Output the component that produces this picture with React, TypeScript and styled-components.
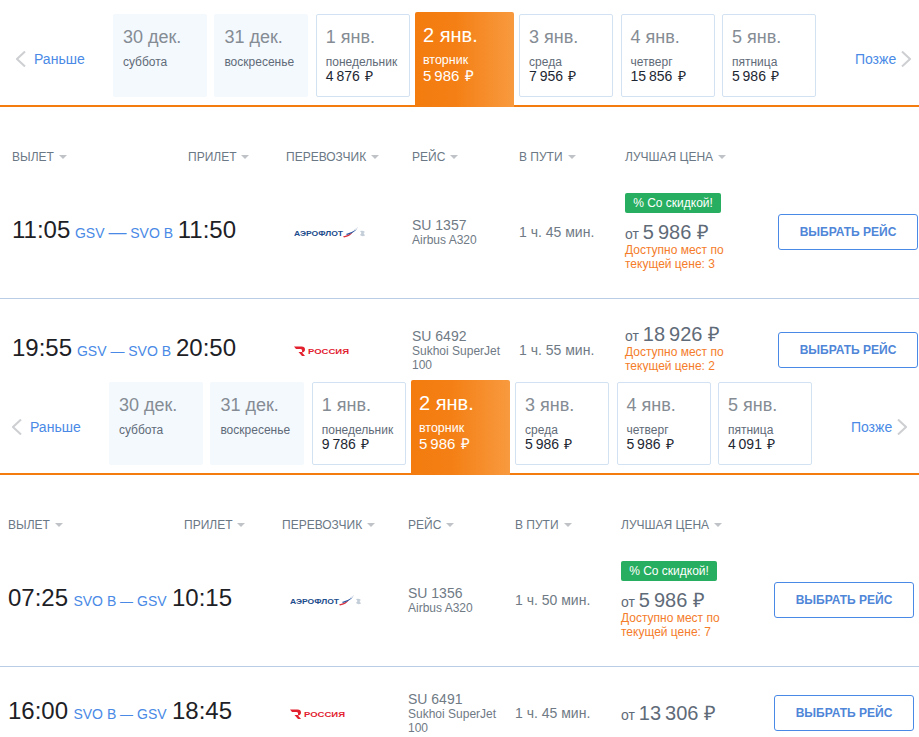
import React from 'react'
import styled, { createGlobalStyle } from 'styled-components'

const GlobalStyle = createGlobalStyle`
    html, body {
        margin: 0;
        padding: 0;
        background: #fff;
        overflow: hidden;
    }

    body {
        width: 919px;
        height: 737px;
        font-family: "Liberation Sans", Arial, sans-serif;
    }
`

const COLUMNS = '176px 98px 126px 107px 106px 153px 140px'

/**
 * Data
 */
interface DayData {
    date: string
    weekday: string
    price?: string
    active?: boolean
}

interface FlightData {
    departure: string
    route: string[]
    dash: number
    arrival: string
    carrier: 'aeroflot' | 'rossiya'
    number: string
    aircraft: string
    duration: string
    discount?: boolean
    price: string
    seats?: number
}

const outboundDays: DayData[] = [
    { date: '30 дек.', weekday: 'суббота' },
    { date: '31 дек.', weekday: 'воскресенье' },
    { date: '1 янв.', weekday: 'понедельник', price: '4\u2009876' },
    { date: '2 янв.', weekday: 'вторник', price: '5\u2009986', active: true },
    { date: '3 янв.', weekday: 'среда', price: '7\u2009956' },
    { date: '4 янв.', weekday: 'четверг', price: '15\u2009856' },
    { date: '5 янв.', weekday: 'пятница', price: '5\u2009986' },
]

const returnDays: DayData[] = [
    { date: '30 дек.', weekday: 'суббота' },
    { date: '31 дек.', weekday: 'воскресенье' },
    { date: '1 янв.', weekday: 'понедельник', price: '9\u2009786' },
    { date: '2 янв.', weekday: 'вторник', price: '5\u2009986', active: true },
    { date: '3 янв.', weekday: 'среда', price: '5\u2009986' },
    { date: '4 янв.', weekday: 'четверг', price: '5\u2009986' },
    { date: '5 янв.', weekday: 'пятница', price: '4\u2009091' },
]

const outboundFlights: FlightData[] = [
    {
        departure: '11:05',
        route: ['GSV', 'SVO B'],
        dash: 18,
        arrival: '11:50',
        carrier: 'aeroflot',
        number: 'SU 1357',
        aircraft: 'Airbus A320',
        duration: '1 ч. 45 мин.',
        discount: true,
        price: '5\u2009986',
        seats: 3,
    },
    {
        departure: '19:55',
        route: ['GSV', 'SVO B'],
        dash: 14,
        arrival: '20:50',
        carrier: 'rossiya',
        number: 'SU 6492',
        aircraft: 'Sukhoi SuperJet 100',
        duration: '1 ч. 55 мин.',
        price: '18\u2009926',
        seats: 2,
    },
]

const returnFlights: FlightData[] = [
    {
        departure: '07:25',
        route: ['SVO B', 'GSV'],
        dash: 13,
        arrival: '10:15',
        carrier: 'aeroflot',
        number: 'SU 1356',
        aircraft: 'Airbus A320',
        duration: '1 ч. 50 мин.',
        discount: true,
        price: '5\u2009986',
        seats: 7,
    },
    {
        departure: '16:00',
        route: ['SVO B', 'GSV'],
        dash: 13,
        arrival: '18:45',
        carrier: 'rossiya',
        number: 'SU 6491',
        aircraft: 'Sukhoi SuperJet 100',
        duration: '1 ч. 45 мин.',
        price: '13\u2009306',
    },
]

const headers = ['Вылет', 'Прилет', 'Перевозчик', 'Рейс', 'В пути', 'Лучшая цена']

/**
 * Styled Components
 */
const Panel = styled.section<{ $height: number; $shift: number; $top: number }>`
    height: ${(p) => p.$height}px;
    width: ${(p) => 919 + p.$shift}px;
    margin-left: ${(p) => -p.$shift}px;
    padding-top: ${(p) => p.$top}px;
    box-sizing: border-box;
    overflow: hidden;
    background: #fff;
`

const Strip = styled.div`
    display: flex;
    align-items: flex-start;
    gap: 7.45px;
    height: 93px;
    border-bottom: 2px solid #f47c0f;
`

const NavLink = styled.a<{ $next?: boolean }>`
    display: flex;
    align-items: center;
    gap: ${(p) => (p.$next ? '5px' : '8px')};
    align-self: center;
    box-sizing: border-box;
    width: ${(p) => (p.$next ? 'auto' : '105.5px')};
    margin-left: ${(p) => (p.$next ? '31.5px' : '0')};
    padding-left: ${(p) => (p.$next ? '0' : '16px')};
    font-size: 14px;
    line-height: 18px;
    color: #4a8ae6;
`

const DayCell = styled.div<{ $empty: boolean }>`
    box-sizing: border-box;
    width: 94px;
    height: 83px;
    margin-top: 2px;
    padding: 10px 9px 0;
    border-radius: 2px;
    background: ${(p) => (p.$empty ? '#f4f9fe' : '#fff')};
    border: 1px solid ${(p) => (p.$empty ? '#f4f9fe' : '#d3e2f2')};
`

const ActiveDayCell = styled.div`
    box-sizing: border-box;
    width: 99px;
    height: 95px;
    margin: 0 -2.3px;
    padding: 11px 8px 0;
    border-radius: 2px 2px 0 0;
    color: #fff;
    background: linear-gradient(90deg, #f47c0f 0%, #f47f14 40%, #f89a3f 100%);
`

const DayDate = styled.div<{ $active?: boolean }>`
    font-size: ${(p) => (p.$active ? '20px' : '18px')};
    line-height: 24px;
    margin-bottom: 6px;
    color: ${(p) => (p.$active ? '#fff' : '#858c94')};
`

const DayName = styled.div<{ $active?: boolean }>`
    font-size: ${(p) => (p.$active ? '12.5px' : '12px')};
    line-height: 14px;
    margin-bottom: ${(p) => (p.$active ? '1px' : '-1px')};
    color: ${(p) => (p.$active ? '#fff' : '#5f6b78')};
`

const DayPrice = styled.div<{ $active?: boolean }>`
    font-size: ${(p) => (p.$active ? '15px' : '14px')};
    line-height: 16px;
    word-spacing: 1.5px;
    color: ${(p) => (p.$active ? '#fff' : '#1d2733')};
`

const HeaderRow = styled.div`
    display: grid;
    grid-template-columns: ${COLUMNS};
    height: 20px;
    margin: 40px 0 2px;
    padding-left: 12px;
`

const HeaderCell = styled.div`
    display: flex;
    align-items: center;
    gap: 5px;
    font-size: 12px;
    line-height: 20px;
    text-transform: uppercase;
    color: #6b7885;

    &::after {
        content: '';
        border-left: 4px solid transparent;
        border-right: 4px solid transparent;
        border-top: 4px solid #bfc3c8;
    }
`

const Row = styled.div`
    display: grid;
    grid-template-columns: ${COLUMNS};
    align-items: center;
    padding: 24px 0 27px 12px;
    border-bottom: 1px solid #b9cde6;
`

const Times = styled.div`
    grid-column: span 2;
    display: flex;
    align-items: baseline;
    justify-content: space-between;
    width: 224px;
    margin-top: -4px;
`

const Time = styled.span`
    font-size: 24px;
    line-height: 28px;
    color: #1d2126;
`

const Route = styled.span`
    font-size: 14px;
    color: #4a8ae6;
    white-space: nowrap;
`

const RouteDash = styled.span<{ $size: number }>`
    font-size: ${(p) => p.$size}px;
    line-height: 1;
`

const Carrier = styled.div`
    display: flex;
    padding: 2px 0 0 8px;
`

const Flight = styled.div`
    width: 96px;
    color: #6f7a85;
`

const FlightNumber = styled.div`
    font-size: 14px;
    line-height: 16px;
`

const Aircraft = styled.div`
    font-size: 12px;
    line-height: 14px;
`

const Duration = styled.div`
    font-size: 14px;
    line-height: 18px;
    color: #6f7a85;
`

const PriceBox = styled.div<{ $spaced: boolean }>`
    display: flex;
    flex-direction: column;
    align-items: flex-start;
    padding: ${(p) => (p.$spaced ? '1px 0 4px' : '0')};
`

const Badge = styled.div`
    box-sizing: border-box;
    width: 96px;
    height: 20px;
    margin-bottom: 9px;
    border-radius: 2px;
    background: #27ae60;
    color: #fff;
    font-size: 12px;
    line-height: 20px;
    text-align: center;
`

const PriceLine = styled.div`
    height: 21px;
    font-size: 14px;
    line-height: 21px;
    color: #5f6b78;
`

const PriceValue = styled.span`
    font-size: 20px;
    line-height: 1;
`

const SeatsNote = styled.div`
    font-size: 12px;
    line-height: 14px;
    color: #f47c2a;
`

const SelectButton = styled.button`
    box-sizing: border-box;
    width: 140px;
    height: 36px;
    padding: 0;
    background: #fff;
    border: 1px solid #4a8ae6;
    border-radius: 3px;
    font-family: inherit;
    font-size: 12px;
    font-weight: 700;
    color: #4f86d8;
`

/**
 * Drawings
 */
const Chevron = ({ right }: { right?: boolean }) => (
    <svg width="10" height="16" viewBox="0 0 10 16" fill="none">
        <polyline
            points={right ? '1,0.5 9,8 1,15.5' : '9,0.5 1,8 9,15.5'}
            stroke="#cdcfd2"
            strokeWidth="2"
        />
    </svg>
)

const AeroflotLogo = () => (
    <svg width="72" height="12" viewBox="0 0 72 12">
        <text
            x="0"
            y="9"
            fontFamily="Liberation Sans, sans-serif"
            fontSize="7"
            fontWeight="700"
            textLength="49"
            lengthAdjust="spacingAndGlyphs"
            fill="#1c4c8c"
        >
            АЭРОФЛОТ
        </text>
        <path d="M49 9.5 Q54 8.5 59 5 Q56 9.5 50 10.5 Z" fill="#d8303c" />
        <path d="M52 7 Q57 6 63 2 Q59 6.5 53 8 Z" fill="#2a55a0" />
        <path d="M60 3 L64 0.5" stroke="#d5dce4" strokeWidth="0.8" />
        <path d="M66 4 Q69 3 71 5 L69.5 6 L71 8.5 Q68 10 66 8 L67.5 6 Z" fill="#c3ced9" />
    </svg>
)

const RossiyaLogo = () => (
    <svg width="56" height="12" viewBox="0 0 56 12">
        <path d="M0 1.5 H7.5 Q11 1.5 11 4.5 Q11 7 8 7.5 L11 11 H8 L4.5 7 H8 Q8.5 4 6.5 4 H2 Z" fill="#e2202e" />
        <text
            x="14"
            y="9"
            fontFamily="Liberation Sans, sans-serif"
            fontSize="7.5"
            fontWeight="700"
            textLength="41"
            lengthAdjust="spacingAndGlyphs"
            fill="#e2202e"
        >
            РОССИЯ
        </text>
    </svg>
)

/**
 * Parts
 */
const Day = ({ day }: { day: DayData }) => {
    const body = (
        <>
            <DayDate $active={day.active}>{day.date}</DayDate>
            <DayName $active={day.active}>{day.weekday}</DayName>
            {day.price && <DayPrice $active={day.active}>{day.price}&nbsp;₽</DayPrice>}
        </>
    )
    return day.active ? <ActiveDayCell>{body}</ActiveDayCell> : <DayCell $empty={!day.price}>{body}</DayCell>
}

const FlightRow = ({ flight }: { flight: FlightData }) => (
    <Row>
        <Times>
            <Time>{flight.departure}</Time>
            <Route>
                {flight.route[0]} <RouteDash $size={flight.dash}>—</RouteDash> {flight.route[1]}
            </Route>
            <Time>{flight.arrival}</Time>
        </Times>
        <Carrier>{flight.carrier === 'aeroflot' ? <AeroflotLogo /> : <RossiyaLogo />}</Carrier>
        <Flight>
            <FlightNumber>{flight.number}</FlightNumber>
            <Aircraft>{flight.aircraft}</Aircraft>
        </Flight>
        <Duration>{flight.duration}</Duration>
        <PriceBox $spaced={!flight.discount && flight.seats !== undefined}>
            {flight.discount && <Badge>% Со скидкой!</Badge>}
            <PriceLine>
                от <PriceValue>{flight.price}&nbsp;₽</PriceValue>
            </PriceLine>
            {flight.seats !== undefined && (
                <SeatsNote>
                    Доступно мест по
                    <br />
                    текущей цене: {flight.seats}
                </SeatsNote>
            )}
        </PriceBox>
        <SelectButton>ВЫБРАТЬ РЕЙС</SelectButton>
    </Row>
)

const Schedule = ({
    days,
    flights,
    height,
    shift,
    top,
}: {
    days: DayData[]
    flights: FlightData[]
    height: number
    shift: number
    top: number
}) => (
    <Panel $height={height} $shift={shift} $top={top}>
        <Strip>
            <NavLink>
                <Chevron />
                Раньше
            </NavLink>
            {days.map((day) => (
                <Day key={day.date} day={day} />
            ))}
            <NavLink $next>
                Позже
                <Chevron right />
            </NavLink>
        </Strip>
        <HeaderRow>
            {headers.map((header) => (
                <HeaderCell key={header}>{header}</HeaderCell>
            ))}
        </HeaderRow>
        {flights.map((flight) => (
            <FlightRow key={flight.number} flight={flight} />
        ))}
    </Panel>
)

export default function App() {
    return (
        <>
            <GlobalStyle />
            <Schedule days={outboundDays} flights={outboundFlights} height={372} shift={0} top={12} />
            <Schedule days={returnDays} flights={returnFlights} height={365} shift={4} top={8} />
        </>
    )
}
